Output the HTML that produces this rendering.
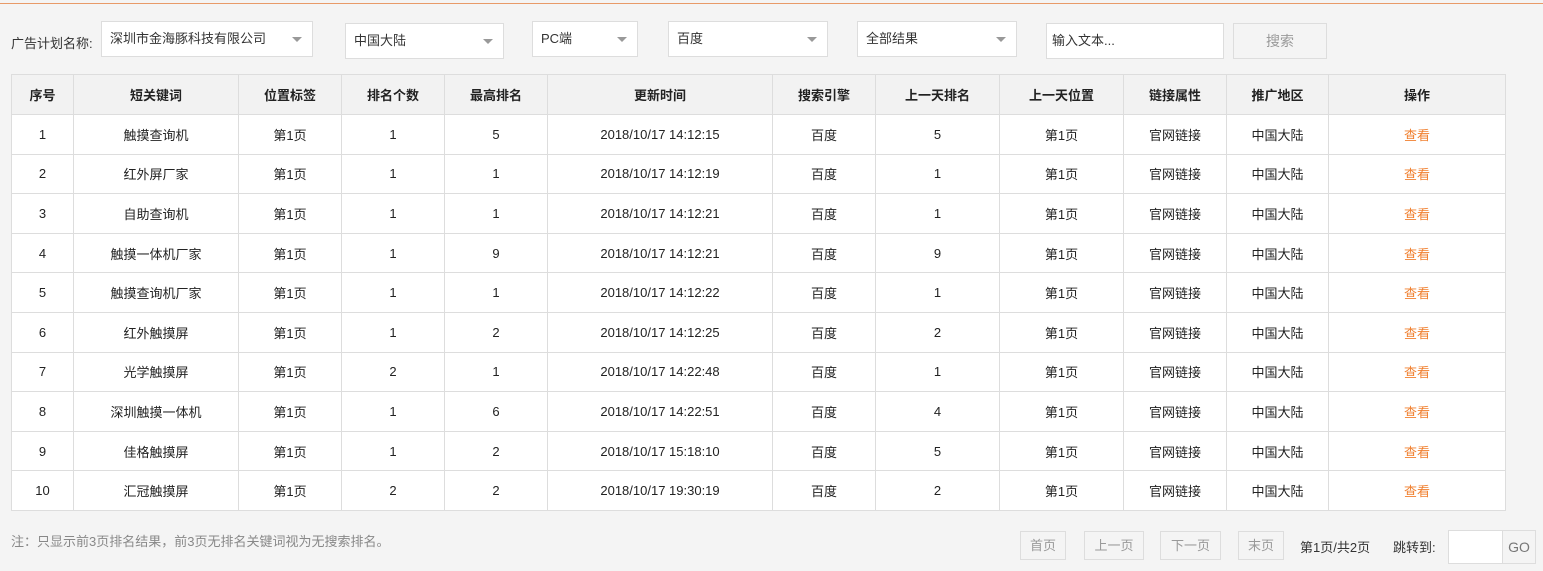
<!DOCTYPE html>
<html><head><meta charset="utf-8"><style>
body{margin:0;width:1543px;height:571px;background:#f4f4f4;font-family:"Liberation Sans","Noto Sans CJK SC",sans-serif;font-size:13px;color:#333;position:relative;overflow:hidden}
.a{position:absolute}
.sel{position:absolute;background:#fff;border:1px solid #ddd;box-sizing:border-box;height:36px;line-height:34px;padding-left:8px;color:#333}
.sel:after{content:"";position:absolute;right:10px;top:15px;border:5px solid transparent;border-top:5px solid #999;border-bottom:0;width:0;height:0}
table{position:absolute;left:11px;top:74px;border-collapse:collapse;background:#fff}
td,th{border:1px solid #ddd;text-align:center;height:38.6px;padding:0;font-size:13px;color:#222}
th{background:#f2f2f2;font-weight:bold;height:39px}
.o{color:#f08030}
.pb{position:absolute;top:531px;height:29px;line-height:27px;border:1px solid #ddd;box-sizing:border-box;text-align:center;color:#999;font-size:13px}
</style></head><body>
<div class="a" style="left:0;top:3px;width:1543px;height:1px;background:#e89a68"></div>
<div class="a" style="left:11px;top:33px">广告计划名称:</div>
<div class="sel" style="left:101px;top:21px;width:212px">深圳市金海豚科技有限公司</div>
<div class="sel" style="left:345px;top:23px;width:159px">中国大陆</div>
<div class="sel" style="left:532px;top:21px;width:106px">PC端</div>
<div class="sel" style="left:668px;top:21px;width:160px">百度</div>
<div class="sel" style="left:857px;top:21px;width:160px">全部结果</div>
<div class="a" style="left:1046px;top:23px;width:178px;height:36px;background:#fff;border:1px solid #ddd;box-sizing:border-box;line-height:34px;padding-left:5px">输入文本...</div>
<div class="a" style="left:1233px;top:23px;width:94px;height:36px;border:1px solid #ddd;box-sizing:border-box;line-height:34px;text-align:center;color:#999;font-size:14px">搜索</div>
<table>
<colgroup><col style="width:62px"><col style="width:165px"><col style="width:103px"><col style="width:103px"><col style="width:103px"><col style="width:225px"><col style="width:103px"><col style="width:124px"><col style="width:124px"><col style="width:103px"><col style="width:102px"><col style="width:177px"></colgroup>
<tr><th>序号</th><th>短关键词</th><th>位置标签</th><th>排名个数</th><th>最高排名</th><th>更新时间</th><th>搜索引擎</th><th>上一天排名</th><th>上一天位置</th><th>链接属性</th><th>推广地区</th><th>操作</th></tr>
<tr><td>1</td><td>触摸查询机</td><td>第1页</td><td>1</td><td>5</td><td>2018/10/17 14:12:15</td><td>百度</td><td>5</td><td>第1页</td><td>官网链接</td><td>中国大陆</td><td class="o">查看</td></tr>
<tr><td>2</td><td>红外屏厂家</td><td>第1页</td><td>1</td><td>1</td><td>2018/10/17 14:12:19</td><td>百度</td><td>1</td><td>第1页</td><td>官网链接</td><td>中国大陆</td><td class="o">查看</td></tr>
<tr><td>3</td><td>自助查询机</td><td>第1页</td><td>1</td><td>1</td><td>2018/10/17 14:12:21</td><td>百度</td><td>1</td><td>第1页</td><td>官网链接</td><td>中国大陆</td><td class="o">查看</td></tr>
<tr><td>4</td><td>触摸一体机厂家</td><td>第1页</td><td>1</td><td>9</td><td>2018/10/17 14:12:21</td><td>百度</td><td>9</td><td>第1页</td><td>官网链接</td><td>中国大陆</td><td class="o">查看</td></tr>
<tr><td>5</td><td>触摸查询机厂家</td><td>第1页</td><td>1</td><td>1</td><td>2018/10/17 14:12:22</td><td>百度</td><td>1</td><td>第1页</td><td>官网链接</td><td>中国大陆</td><td class="o">查看</td></tr>
<tr><td>6</td><td>红外触摸屏</td><td>第1页</td><td>1</td><td>2</td><td>2018/10/17 14:12:25</td><td>百度</td><td>2</td><td>第1页</td><td>官网链接</td><td>中国大陆</td><td class="o">查看</td></tr>
<tr><td>7</td><td>光学触摸屏</td><td>第1页</td><td>2</td><td>1</td><td>2018/10/17 14:22:48</td><td>百度</td><td>1</td><td>第1页</td><td>官网链接</td><td>中国大陆</td><td class="o">查看</td></tr>
<tr><td>8</td><td>深圳触摸一体机</td><td>第1页</td><td>1</td><td>6</td><td>2018/10/17 14:22:51</td><td>百度</td><td>4</td><td>第1页</td><td>官网链接</td><td>中国大陆</td><td class="o">查看</td></tr>
<tr><td>9</td><td>佳格触摸屏</td><td>第1页</td><td>1</td><td>2</td><td>2018/10/17 15:18:10</td><td>百度</td><td>5</td><td>第1页</td><td>官网链接</td><td>中国大陆</td><td class="o">查看</td></tr>
<tr><td>10</td><td>汇冠触摸屏</td><td>第1页</td><td>2</td><td>2</td><td>2018/10/17 19:30:19</td><td>百度</td><td>2</td><td>第1页</td><td>官网链接</td><td>中国大陆</td><td class="o">查看</td></tr>
</table>
<div class="a" style="left:11px;top:531px;color:#888">注：只显示前3页排名结果，前3页无排名关键词视为无搜索排名。</div>
<div class="pb" style="left:1020px;width:46px">首页</div>
<div class="pb" style="left:1084px;width:60px">上一页</div>
<div class="pb" style="left:1160px;width:61px">下一页</div>
<div class="pb" style="left:1238px;width:46px">末页</div>
<div class="a" style="left:1300px;top:537px;color:#333">第1页/共2页</div>
<div class="a" style="left:1393px;top:537px;color:#333">跳转到:</div>
<div class="a" style="left:1448px;top:530px;width:88px;height:34px;border:1px solid #ddd;box-sizing:border-box;background:#fff"></div>
<div class="a" style="left:1502px;top:530px;width:34px;height:34px;border:1px solid #ddd;box-sizing:border-box;background:#f4f4f4;line-height:32px;text-align:center;color:#777;font-size:14px">GO</div>
</body></html>
